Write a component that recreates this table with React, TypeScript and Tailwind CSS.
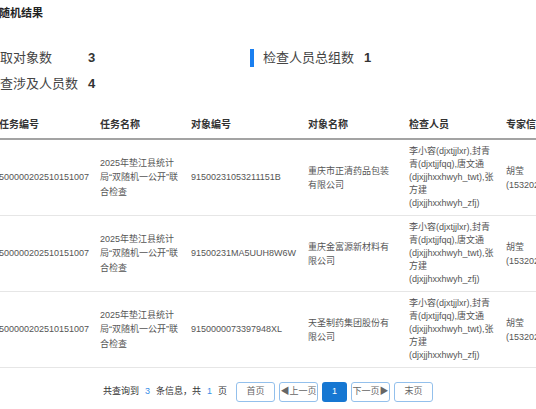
const rows = [
  { taskNo: "500000202510151007", objNo: "91500231053211151B", objName: "重庆市正清药品包装有限公司" },
  { taskNo: "500000202510151007", objNo: "91500231MA5UUH8W6W", objName: "重庆金富源新材料有限公司" },
  { taskNo: "500000202510151007", objNo: "9150000073397948XL", objName: "天圣制药集团股份有限公司" },
];

const taskName = "2025年垫江县统计局“双随机一公开”联合检查";
const inspectors = "李小容(djxtjjlxr),封青青(djxtjjfqq),唐文通(djxjjhxxhwyh_twt),张方建(djxjjhxxhwyh_zfj)";

const cols = "grid grid-cols-[101px_91px_117px_101px_97px_100px]";

function Stat({ label, value }: { label: string; value: string }) {
  return (
    <div className="flex h-[18px] items-center">
      <span className="h-[18px] w-[4px] bg-[#1a7ff0]" />
      <span className="ml-[9px] w-[101px] text-[13px] text-[#444]">{label}</span>
      <span className="text-[13px] font-semibold text-[#333]">{value}</span>
    </div>
  );
}

function PageButton({ children, active }: { children: React.ReactNode; active?: boolean }) {
  return (
    <button
      className={
        active
          ? "flex h-[20px] w-[25px] items-center justify-center rounded-[3px] bg-[#1677d2] text-[9px] text-white"
          : "flex h-[20px] w-[39px] items-center justify-center rounded-[3px] border border-[#93c0ec] bg-white text-[9px] text-[#666]"
      }
    >
      {children}
    </button>
  );
}

export default function App() {
  return (
    <div className="h-[409px] w-[536px] overflow-hidden bg-white font-['Liberation_Sans','Noto_Sans_CJK_SC',sans-serif]">
      <div className="-ml-[26px] w-[640px]">
        <h3 className="pl-[14px] pt-[5px] text-[11px] font-bold leading-[16px] text-[#222]">双随机结果</h3>

        <div className="mt-[28px] grid grid-cols-[276px_auto] gap-y-[8px]">
          <Stat label="抽取对象数" value="3" />
          <Stat label="检查人员总组数" value="1" />
          <Stat label="检查涉及人员数" value="4" />
        </div>

        <div className="ml-[25px] mt-[17px]">
          <div className={`${cols} h-[30px] items-center border-b-2 border-[#a3a3a3] text-[10px] font-bold text-[#333]`}>
            <div>任务编号</div>
            <div>任务名称</div>
            <div>对象编号</div>
            <div>对象名称</div>
            <div>检查人员</div>
            <div className="whitespace-nowrap">专家信息</div>
          </div>

          {rows.map((r, i) => (
            <div key={i} className={`${cols} items-center border-b border-[#e6e6e6] py-[5px] text-[9px] text-[#555]`}>
              <div className="whitespace-nowrap">{r.taskNo}</div>
              <div className="pr-[11px] leading-[14.5px]">{taskName}</div>
              <div className="whitespace-nowrap">{r.objNo}</div>
              <div className="pr-[14px] leading-[14px]">{r.objName}</div>
              <div className="pr-[10px] leading-[13px]">{inspectors}</div>
              <div className="w-[60px] leading-[14px]">胡莹(15320236688)</div>
            </div>
          ))}
        </div>
      </div>

      <div className="mt-[14px] flex items-center justify-center text-[9px] text-[#333]">
        <span>共查询到</span>
        <span className="mx-[6px] text-[#3a8ee6]">3</span>
        <span>条信息，共</span>
        <span className="mx-[6px] text-[#3a8ee6]">1</span>
        <span>页</span>
        <div className="ml-[9px] flex gap-[4px]">
          <PageButton>首页</PageButton>
          <PageButton>◀上一页</PageButton>
          <PageButton active>1</PageButton>
          <PageButton>下一页▶</PageButton>
          <PageButton>末页</PageButton>
        </div>
      </div>
    </div>
  );
}
